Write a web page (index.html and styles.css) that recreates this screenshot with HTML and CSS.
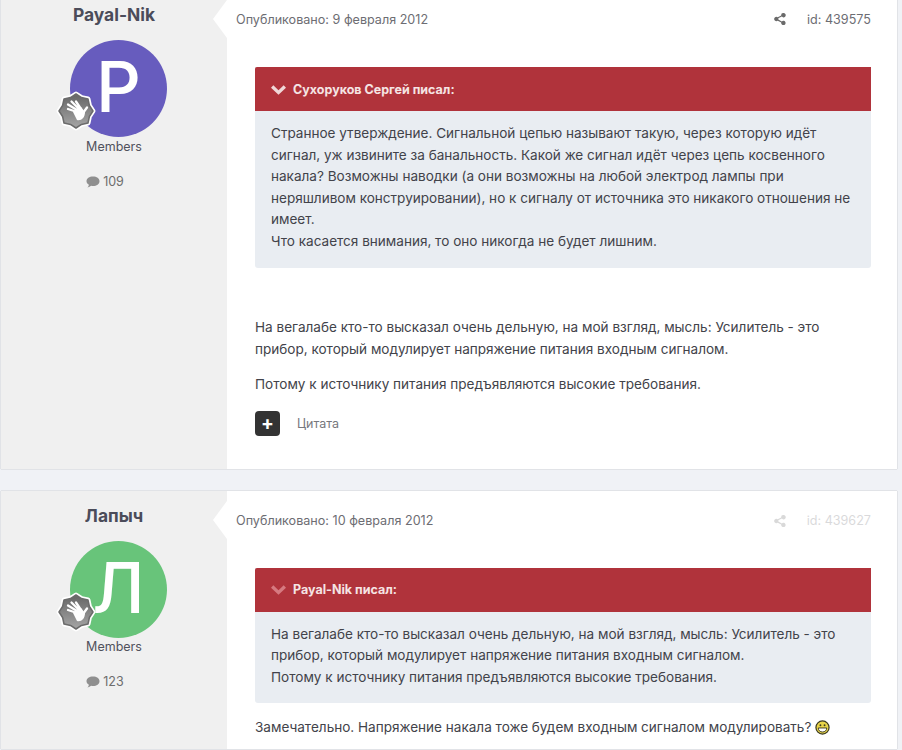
FILE: index.html
```html
<!DOCTYPE html>
<html>
    <head>
        <title>Форум</title>
        <meta charset="utf-8">
        <link rel="stylesheet" href="styles.css">
    </head>
    <body>
        <svg class="defs" width="0" height="0">
            <defs>
                <linearGradient id="sealfill" x1="0" y1="0" x2="0" y2="1">
                    <stop offset="0" stop-color="#656565"/>
                    <stop offset="1" stop-color="#a6a6a6"/>
                </linearGradient>
                <symbol id="seal" viewBox="0 0 40 40">
                    <polygon points="20,3 25.500,6.600 32,8 33.400,14.500 37,20 33.400,25.500 32,32 25.500,33.400 20,37 14.500,33.400 8,32 6.600,25.500 3,20 6.600,14.500 8,8 14.500,6.600" fill="white" stroke="white" stroke-width="5" stroke-linejoin="round"/>
                    <polygon points="20,3 25.500,6.600 32,8 33.400,14.500 37,20 33.400,25.500 32,32 25.500,33.400 20,37 14.500,33.400 8,32 6.600,25.500 3,20 6.600,14.500 8,8 14.500,6.600" fill="url(#sealfill)" stroke="#6b6b6b" stroke-width="1.500" stroke-linejoin="round"/>
                    <path d="M17 21L25 16L29 21C29 27 25 30 21 29Z" fill="white"/>
                    <path d="M21 21L12 18M21 19L12 13.500M23 18L15.500 10.500M25 18L20 10.500M27 22L31 16.500" stroke="white" stroke-width="2.300" stroke-linecap="round"/>
                </symbol>
                <symbol id="comment" viewBox="0 0 14 12">
                    <path d="M7 .5c3.700 0 6.500 2 6.500 4.700S10.700 10 7 10c-.7 0-1.300-.1-1.900-.2C4.200 10.700 3 11.300 1.500 11.500c.8-.8 1.300-1.700 1.400-2.700C1.400 7.900.5 6.700.5 5.200.5 2.500 3.300.5 7 .5z"/>
                </symbol>
                <symbol id="share" viewBox="0 0 12 12">
                    <path d="M9.500 0a2.200 2.200 0 1 1-1.700 3.600L4.300 5.300a2.200 2.200 0 0 1 0 1.300l3.500 1.800a2.200 2.200 0 1 1-.6 1.200L3.700 7.800a2.200 2.200 0 1 1 0-3.600l3.500-1.800A2.200 2.200 0 0 1 9.500 0z"/>
                </symbol>
                <symbol id="chevron" viewBox="0 0 16 11">
                    <path d="M2.500 1L8 6.300 13.500 1 16 3.500 8 11 0 3.500z"/>
                </symbol>
            </defs>
        </svg>

        <div class="post">
            <div class="author">
                <h3 class="name">Payal-Nik</h3>
                <div class="avatar purple">
                    P
                    <svg class="seal"><use href="#seal"/></svg>
                </div>
                <p class="group">Members</p>
                <p class="count"><svg class="comment"><use href="#comment"/></svg>109</p>
            </div>
            <div class="main">
                <div class="meta">
                    <span class="date">Опубликовано: 9 февраля 2012</span>
                    <svg class="share"><use href="#share"/></svg>
                    <span class="id">id: 439575</span>
                </div>
                <div class="quote">
                    <div class="quote-head"><svg class="chevron"><use href="#chevron"/></svg>Сухоруков Сергей писал:</div>
                    <div class="quote-body">
                        Странное утверждение. Сигнальной цепью называют такую, через которую идёт сигнал, уж извините за банальность. Какой же сигнал идёт через цепь косвенного накала? Возможны наводки (а они возможны на любой электрод лампы при неряшливом конструировании), но к сигналу от источника это никакого отношения не имеет.<br>
                        Что касается внимания, то оно никогда не будет лишним.
                    </div>
                </div>
                <p class="text first">На вегалабе кто-то высказал очень дельную, на мой взгляд, мысль: Усилитель - это прибор, который модулирует напряжение питания входным сигналом.</p>
                <p class="text">Потому к источнику питания предъявляются высокие требования.</p>
                <div class="actions">
                    <span class="plus">+</span>
                    <span class="cite">Цитата</span>
                </div>
            </div>
        </div>

        <div class="post">
            <div class="author">
                <h3 class="name">Лапыч</h3>
                <div class="avatar green">
                    Л
                    <svg class="seal"><use href="#seal"/></svg>
                </div>
                <p class="group">Members</p>
                <p class="count"><svg class="comment"><use href="#comment"/></svg>123</p>
            </div>
            <div class="main">
                <div class="meta faded">
                    <span class="date">Опубликовано: 10 февраля 2012</span>
                    <svg class="share"><use href="#share"/></svg>
                    <span class="id">id: 439627</span>
                </div>
                <div class="quote second">
                    <div class="quote-head"><svg class="chevron"><use href="#chevron"/></svg>Payal-Nik писал:</div>
                    <div class="quote-body">
                        На вегалабе кто-то высказал очень дельную, на мой взгляд, мысль: Усилитель - это прибор, который модулирует напряжение питания входным сигналом.<br>
                        Потому к источнику питания предъявляются высокие требования.
                    </div>
                </div>
                <p class="text reply">Замечательно. Напряжение накала тоже будем входным сигналом модулировать?
                    <svg class="smile" viewBox="0 0 16 16">
                        <circle cx="8" cy="8" r="7" fill="#e8d44a" stroke="#3a3a20" stroke-width="1.300"/>
                        <path d="M3.500 8.500h9c0 2.700-2 4.300-4.500 4.300s-4.500-1.600-4.500-4.300z" fill="#fff" stroke="#3a3a20"/>
                        <circle cx="5.800" cy="5.600" r="1" fill="#3a3a20"/>
                        <circle cx="10.200" cy="5.600" r="1" fill="#3a3a20"/>
                    </svg>
                </p>
            </div>
        </div>
    </body>
</html>
```

FILE: styles.css
```css
html, body{
    height: 750px;
    overflow: hidden;
}
body{
    margin: 0;
    padding: 0 5px 0 1px;
    background-color: #f0f2f6;
    font-family: Inter, "Liberation Sans", sans-serif;
    font-size: 13.550px;
    color: #3f4048;
    display: flex;
    flex-direction: column;
    gap: 22px;
}
p, h3{
    margin: 0;
}
.defs{
    position: absolute;
}
.post{
    display: flex;
    flex-shrink: 0;
    background-color: white;
    box-shadow: 0 0 1px rgba(0,0,0,0.35);
}
.author{
    width: 226px;
    flex-shrink: 0;
    background-color: #f0f0f0;
    display: flex;
    flex-direction: column;
    align-items: center;
}
.name{
    font-size: 17.400px;
    font-weight: 700;
    line-height: 22px;
    color: #4b4c5a;
    margin-top: 4px;
}
.post + .post .name{
    margin-top: 14px;
}
.avatar{
    width: 97px;
    height: 97px;
    border-radius: 50%;
    margin: 14px 0 0 9px;
    color: white;
    font-size: 70px;
    font-weight: 500;
    line-height: 94px;
    text-align: center;
    position: relative;
}
.purple{
    background-color: #675cbe;
}
.green{
    background-color: #68c47a;
}
.seal{
    position: absolute;
    left: -14px;
    top: 51px;
    width: 40px;
    height: 40px;
}
.group{
    font-size: 12.500px;
    line-height: 18px;
    margin-top: 1px;
    color: #50525c;
}
.post + .post .group{
    margin-top: 0;
}
.count{
    margin-top: 17px;
    padding-right: 18px;
    font-size: 12.500px;
    line-height: 18px;
    color: #6d6d6d;
    display: flex;
    align-items: center;
    gap: 3px;
}
.comment{
    width: 14px;
    height: 12px;
    fill: #8f8f8f;
}
.main{
    flex: 1;
    padding: 0 26px 0 28px;
    position: relative;
}
.main::before{
    content: "";
    position: absolute;
    left: -14px;
    top: 0;
    border-style: solid;
    border-width: 19px 14px 19px 0;
    border-color: transparent white transparent transparent;
}
.post + .post .main::before{
    top: 10px;
}
.meta{
    display: flex;
    align-items: center;
    height: 38px;
    margin-left: -19px;
    font-size: 12.600px;
    color: #6d6d73;
}
.post + .post .meta{
    margin-top: 11px;
}
.date{
    flex: 1;
}
.share{
    width: 12px;
    height: 12px;
    fill: #6a6a6a;
    margin-right: 21px;
}
.faded .share, .faded .id{
    opacity: 0.25;
}
.quote{
    margin-top: 29px;
    background-color: #e9edf2;
    border-radius: 0 0 3px 3px;
}
.post + .post .quote{
    margin-top: 28px;
}
.quote-head{
    height: 44px;
    background-color: #b0333b;
    border-radius: 2px 0 0 0;
    color: #f5e4e4;
    font-weight: 700;
    font-size: 12.500px;
    padding-left: 16px;
    display: flex;
    align-items: center;
    gap: 7px;
}
.chevron{
    width: 15px;
    height: 11px;
    fill: #f0d8d8;
}
.second .chevron{
    fill: #d67a80;
}
.quote-body{
    padding: 12px 16px 15px;
    line-height: 21.600px;
    color: #42434a;
}
.text{
    line-height: 22px;
    color: #42434a;
    margin-bottom: 13px;
}
.first{
    margin-top: 48px;
}
.reply{
    margin-top: 13px;
    margin-bottom: 11px;
}
.smile{
    width: 15px;
    height: 15px;
    vertical-align: -3px;
}
.actions{
    display: flex;
    align-items: center;
    gap: 17px;
    margin-top: 16px;
    padding-bottom: 33px;
}
.plus{
    width: 25px;
    height: 25px;
    border-radius: 4px;
    background-color: #333333;
    color: white;
    font-size: 19px;
    font-weight: 700;
    line-height: 25px;
    text-align: center;
}
.cite{
    font-size: 12.500px;
    color: #77777d;
}
```
